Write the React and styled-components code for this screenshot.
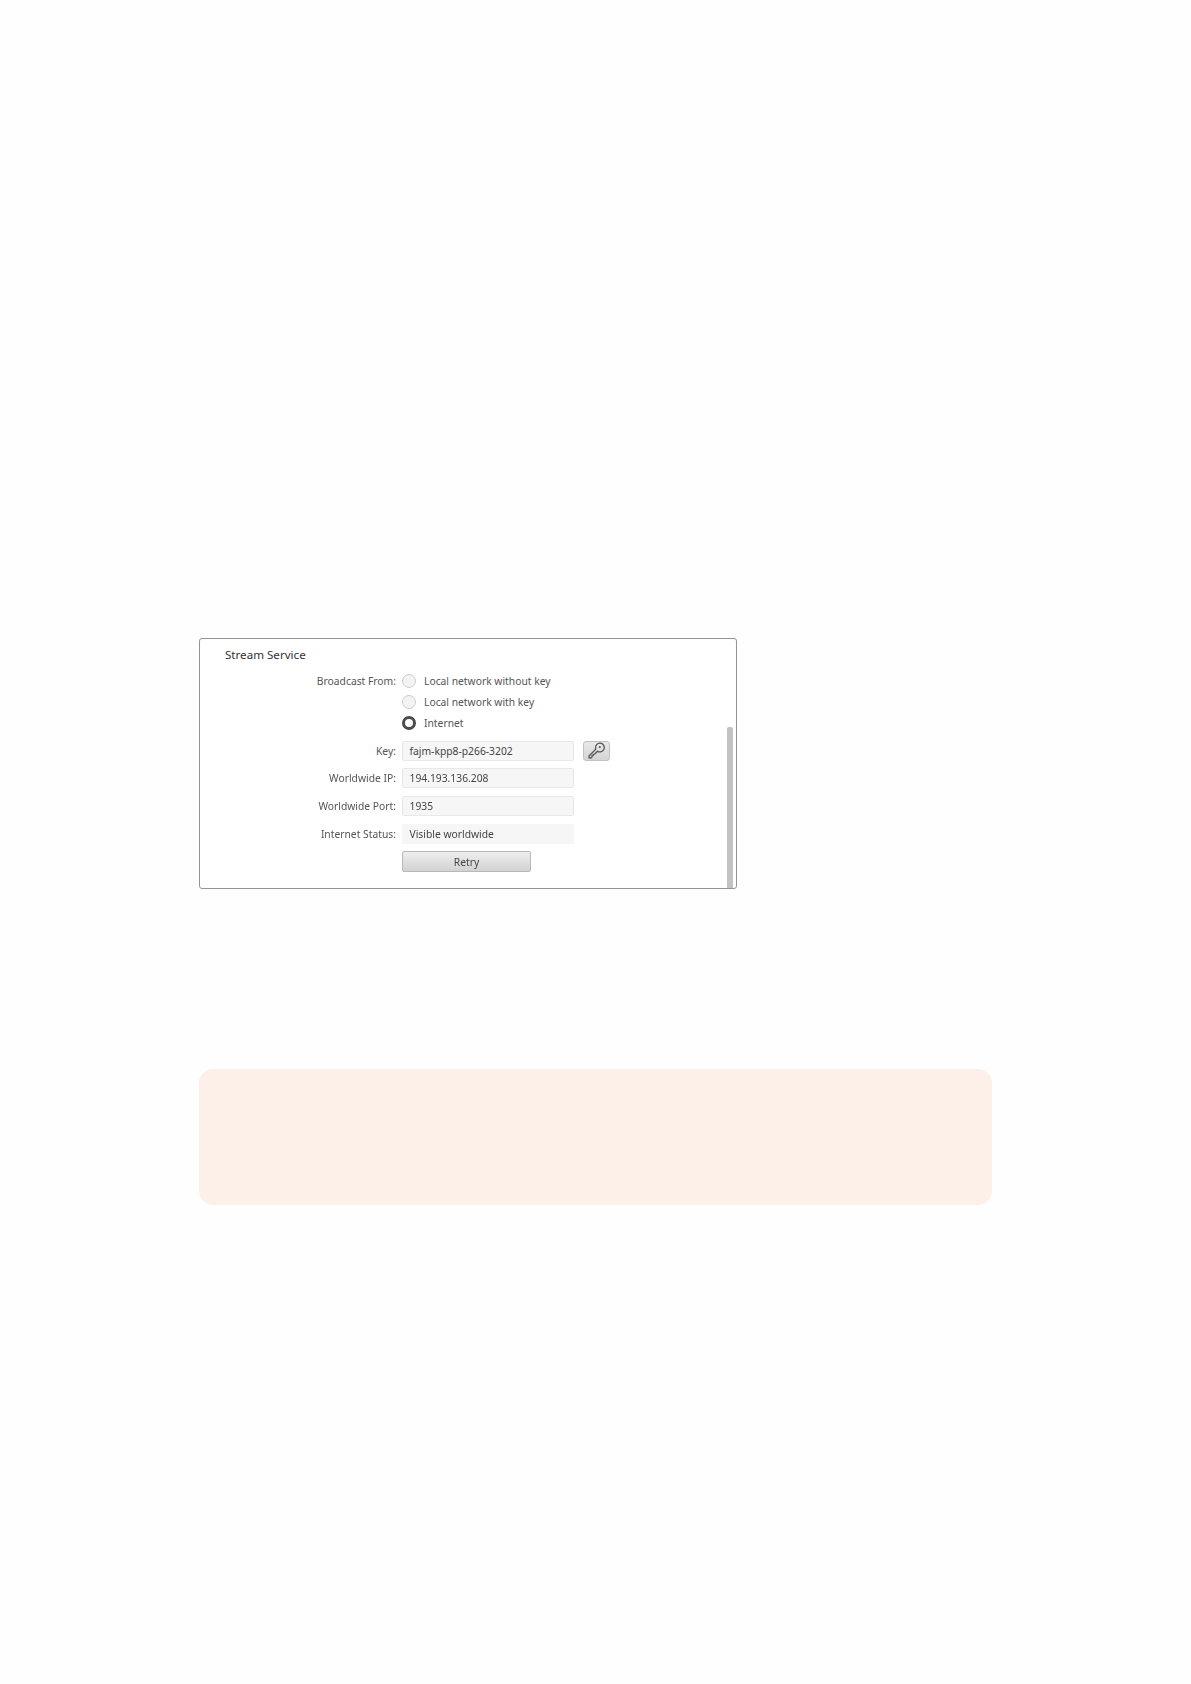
import React from 'react'
import styled, { createGlobalStyle } from 'styled-components'

const fields = [
  { label: 'Worldwide IP:', value: '194.193.136.208' },
  { label: 'Worldwide Port:', value: '1935' },
]

const sources = [
  { label: 'Local network without key' },
  { label: 'Local network with key' },
  { label: 'Internet', checked: true },
]

export default function App() {
  return (
    <>
      <GlobalStyle />
      <Page>
        <Panel>
          <PanelBody>
            <Title>Stream Service</Title>
            <SourceGrid>
              {sources.map((source, i) => (
                <React.Fragment key={source.label}>
                  <Label>{i === 0 ? 'Broadcast From:' : ''}</Label>
                  <RadioRow>
                    <Radio $checked={source.checked} />
                    <span>{source.label}</span>
                  </RadioRow>
                </React.Fragment>
              ))}
            </SourceGrid>
            <FieldGrid>
              <Label>Key:</Label>
              <KeyRow>
                <Field>fajm-kpp8-p266-3202</Field>
                <KeyButton aria-label="Generate key">
                  <KeyIcon />
                </KeyButton>
              </KeyRow>
              {fields.map((field) => (
                <React.Fragment key={field.label}>
                  <Label>{field.label}</Label>
                  <Field>{field.value}</Field>
                </React.Fragment>
              ))}
              <Label>Internet Status:</Label>
              <Field $plain>Visible worldwide</Field>
              <span />
              <RetryButton>Retry</RetryButton>
            </FieldGrid>
          </PanelBody>
          <ScrollBar />
        </Panel>
        <Note />
      </Page>
    </>
  )
}

function KeyIcon() {
  return (
    <svg width="19" height="19" viewBox="0 0 19 19" fill="none" stroke="#555" strokeWidth="1.3" strokeLinejoin="round">
      <path d="M8.6 8.4 2 15l0 1.8 1.9.2 1.1-1.1 0-1.2 1.2-.1 0-1.2 1.3-.2 3-3a4.4 4.4 0 1 0-1.9-2.8z" />
      <circle cx="12.8" cy="6" r="1" fill="#555" stroke="none" />
    </svg>
  )
}

const GlobalStyle = createGlobalStyle`
  html, body {
    margin: 0;
    background: #fefefe;
  }
`

const Page = styled.div`
  width: 1191px;
  height: 1684px;
  box-sizing: border-box;
  padding: 638px 199px 0;
  font-family: "Noto Sans", "Open Sans", sans-serif;
  font-size: 10.3px;
  color: #444;
`

const Panel = styled.section`
  width: 538px;
  height: 251px;
  box-sizing: border-box;
  display: flex;
  justify-content: space-between;
  border: 1px solid #949494;
  border-radius: 3px;
  background: #fff;
  filter: blur(0.4px);
`

const PanelBody = styled.div`
  flex: 1;
  padding-top: 7px;
`

const Title = styled.h2`
  margin: 0 0 8px 25px;
  height: 17px;
  line-height: 17px;
  font-size: 11.6px;
  font-weight: 400;
  color: #333;
`

const SourceGrid = styled.div`
  display: grid;
  grid-template-columns: 196px 1fr;
  column-gap: 6px;
  grid-auto-rows: 20.7px;
  margin-bottom: 7.5px;
`

const FieldGrid = styled.div`
  display: grid;
  grid-template-columns: 196px 1fr;
  column-gap: 6px;
  row-gap: 7.7px;
  grid-auto-rows: 20px;
`

const Label = styled.div`
  display: flex;
  align-items: center;
  justify-content: flex-end;
  color: #555;
`

const RadioRow = styled.label`
  display: flex;
  align-items: center;
  gap: 8px;
  color: #555;
`

const Radio = styled.span`
  width: 14px;
  height: 14px;
  box-sizing: border-box;
  border-radius: 50%;
  background: ${(props) => (props.$checked ? '#fff' : '#f3f3f3')};
  border: ${(props) => (props.$checked ? '3.5px solid #4a4a4a' : '1px solid #cdcdcd')};
`

const KeyRow = styled.div`
  display: flex;
  gap: 9px;
`

const Field = styled.div`
  width: 172px;
  height: 20px;
  box-sizing: border-box;
  display: flex;
  align-items: center;
  padding-left: 6.5px;
  background: #f6f6f6;
  border: 1px solid ${(props) => (props.$plain ? '#f6f6f6' : '#e8e8e8')};
  border-radius: ${(props) => (props.$plain ? '0' : '2px')};
  color: #444;
`

const KeyButton = styled.button`
  width: 27px;
  height: 20px;
  padding: 0;
  display: flex;
  align-items: center;
  justify-content: center;
  background: linear-gradient(#e8e8e8, #d4d4d4);
  border: 1px solid #c2c2c2;
  border-radius: 3px;
`

const RetryButton = styled.button`
  width: 129px;
  height: 21px;
  padding: 0;
  font: inherit;
  color: #444;
  background: linear-gradient(#eeeeee, #d2d2d2);
  border: 1px solid #b8b8b8;
  border-radius: 2px;
`

const ScrollBar = styled.div`
  align-self: flex-end;
  width: 6px;
  height: 161px;
  margin-right: 3px;
  background: #c2c2c2;
  border-radius: 2px 2px 0 0;
`

const Note = styled.aside`
  width: 793px;
  height: 136px;
  margin-top: 180px;
  background: #fcf0e9;
  border-radius: 14px;
`
